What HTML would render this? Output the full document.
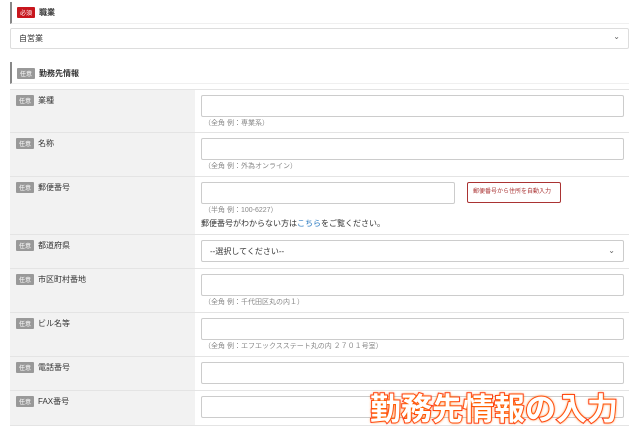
<!DOCTYPE html>
<html><head><meta charset="utf-8"><style>
*{box-sizing:border-box;margin:0;padding:0}
body{width:640px;height:438px;background:#fff;font-family:"Liberation Sans","Noto Sans CJK JP",sans-serif;color:#333;position:relative;overflow:hidden;font-size:8px}
.a{position:absolute}
.hd{border-left:2px solid #888;height:22px;border-bottom:1px solid #f0f0f0}
.req{background:#c8161d;color:#fff;font-size:6px;padding:1px 3px;border-radius:1px;display:inline-block;margin-right:4px}
.opt{background:#999;color:#fff;font-size:6px;padding:1px 3px;border-radius:1px;display:inline-block;margin-right:4px}
.ttl{font-size:8px;font-weight:bold}
.row{position:absolute;left:10px;width:619px;border-top:1px solid #e4e4e4}
.lab{position:absolute;left:0;top:0;bottom:0;width:185px;background:#f2f2f2;padding:5px 6px;font-size:8px}
.inp{position:absolute;left:191px;top:5px;width:423px;height:22px;border:1px solid #ccc;border-radius:2px;background:#fff}
.hint{position:absolute;left:194px;font-size:7px;color:#888}
.chev{position:absolute;right:8px;top:5px;font-size:8px;color:#666}
.ov{position:absolute;left:370px;top:384px;font-size:31px;font-weight:bold;color:#fff;-webkit-text-stroke:2px #f22;paint-order:stroke fill;text-shadow:0 0 3px #f60,0 0 2px #f80;white-space:nowrap}
</style></head><body>
<div class="a hd" style="left:10px;top:2px;width:619px;padding:5px 0 0 5px"><span class="req">必須</span><span class="ttl">職業</span></div>
<div class="a" style="left:10px;top:28px;width:619px;height:21px;border:1px solid #ddd;border-radius:2px;padding:4px 8px;font-size:8px">自営業<span class="chev" style="top:3px">⌄</span></div>
<div class="a hd" style="left:10px;top:62px;width:619px;padding:6px 0 0 5px"><span class="opt">任意</span><span class="ttl">勤務先情報</span></div>

<div class="row" style="top:89px;height:43px"><div class="lab"><span class="opt">任意</span>業種</div><div class="inp"></div><div class="hint" style="top:28px">（全角 例：専業系）</div></div>
<div class="row" style="top:132px;height:44px"><div class="lab"><span class="opt">任意</span>名称</div><div class="inp"></div><div class="hint" style="top:28px">（全角 例：外為オンライン）</div></div>
<div class="row" style="top:176px;height:58px"><div class="lab"><span class="opt">任意</span>郵便番号</div><div class="inp" style="width:254px"></div>
<div class="a" style="left:457px;top:5px;width:94px;height:21px;border:1px solid #a33;border-radius:2px;color:#a33;font-size:6px;padding:3px 5px">郵便番号から住所を自動入力</div>
<div class="hint" style="top:28px">（半角 例：100-6227）</div>
<div class="a" style="left:191px;top:41px;font-size:8px">郵便番号がわからない方は<span style="color:#2a7ac0">こちら</span>をご覧ください。</div></div>
<div class="row" style="top:234px;height:34px"><div class="lab"><span class="opt">任意</span>都道府県</div><div class="inp" style="top:5px;padding:5px 8px;font-size:8px">--選択してください--<span class="chev">⌄</span></div></div>
<div class="row" style="top:268px;height:44px"><div class="lab"><span class="opt">任意</span>市区町村番地</div><div class="inp"></div><div class="hint" style="top:28px">（全角 例：千代田区丸の内１）</div></div>
<div class="row" style="top:312px;height:44px"><div class="lab"><span class="opt">任意</span>ビル名等</div><div class="inp"></div><div class="hint" style="top:28px">（全角 例：エフエックスステート丸の内 ２７０１号室）</div></div>
<div class="row" style="top:356px;height:34px"><div class="lab"><span class="opt">任意</span>電話番号</div><div class="inp" style="top:5px"></div></div>
<div class="row" style="top:390px;height:36px;border-bottom:1px solid #e4e4e4"><div class="lab"><span class="opt">任意</span>FAX番号</div><div class="inp" style="top:5px"></div></div>
<div class="ov">勤務先情報の入力</div>
</body></html>
